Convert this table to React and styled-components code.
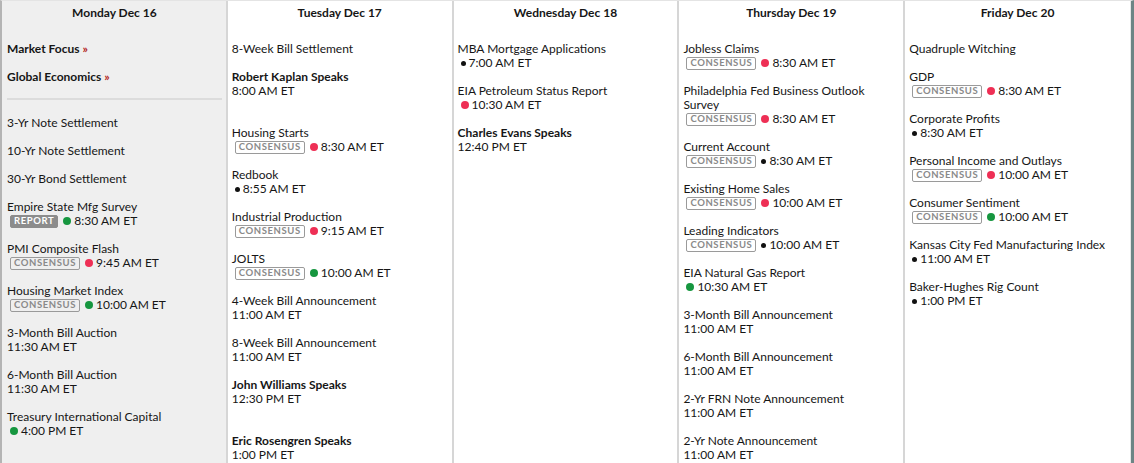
import styled, { createGlobalStyle } from 'styled-components'

const GlobalStyle = createGlobalStyle`
  html, body {
    margin: 0;
    padding: 0;
    background: #fff;
    overflow: hidden;
  }
  body {
    font-family: Lato, "Open Sans", sans-serif;
    color: #161616;
  }
`

const Calendar = styled.div`
  display: grid;
  grid-template-columns: repeat(5, 1fr);
  width: 1134px;
  height: 463px;
  box-sizing: border-box;
  border-left: 2px solid #b4b4b4;
  border-right: 3px solid #6d8585;
  border-top: 1px solid #e4e4e4;
  overflow: hidden;
`

const Day = styled.div`
  background: ${p => (p.$today ? '#efefef' : '#fff')};
  border-right: 2px solid #d6d6d6;
  padding: 0 4px 0 ${p => (p.$today ? '5px' : '4px')};
  font-size: 12px;
  line-height: 14px;

  &:last-child {
    border-right: 1px solid #e6e6e6;
  }
`

const DayHeader = styled.div`
  text-align: center;
  font-weight: 700;
  padding-top: 5px;
  margin-bottom: 22px;
`

const Event = styled.div`
  margin-bottom: ${p => (p.$speaker ? '28px' : '14px')};
`

const Name = styled.div`
  font-weight: ${p => (p.$bold ? 700 : 400)};
`

const FocusLink = styled.div`
  font-weight: 700;
  margin-bottom: 14px;

  span {
    color: #b3261e;
    font-weight: 700;
  }
`

const Divider = styled.div`
  border-top: 2px solid #dcdcdc;
  margin: 0 0 16px;
`

const Meta = styled.div`
  display: flex;
  align-items: center;
  padding-left: ${p => (p.$marked ? '3px' : '0')};
  white-space: nowrap;
`

const Badge = styled.span`
  display: inline-flex;
  align-items: center;
  height: 11px;
  padding: 0 3px;
  margin-right: 5px;
  font-size: 9.5px;
  font-weight: 700;
  letter-spacing: 0.6px;
  border-radius: 2px;
  border: 1px solid ${p => (p.$report ? '#8c8c8c' : '#9a9a9a')};
  background: ${p => (p.$report ? '#8c8c8c' : 'transparent')};
  color: ${p => (p.$report ? '#fff' : '#8a8a8a')};
`

const Dot = styled.span`
  display: inline-block;
  flex: none;
  width: ${p => (p.$color === 'black' ? '5px' : '8px')};
  height: ${p => (p.$color === 'black' ? '5px' : '8px')};
  border-radius: 50%;
  margin-right: 3px;
  background: ${p =>
    p.$color === 'red' ? '#ee2f55' : p.$color === 'green' ? '#16963f' : '#111'};
`

const days = [
  {
    title: 'Monday Dec 16',
    today: true,
    events: [
      { name: '3-Yr Note Settlement' },
      { name: '10-Yr Note Settlement' },
      { name: '30-Yr Bond Settlement' },
      { name: 'Empire State Mfg Survey', badge: 'REPORT', dot: 'green', time: '8:30 AM ET' },
      { name: 'PMI Composite Flash', badge: 'CONSENSUS', dot: 'red', time: '9:45 AM ET' },
      { name: 'Housing Market Index', badge: 'CONSENSUS', dot: 'green', time: '10:00 AM ET' },
      { name: '3-Month Bill Auction', time: '11:30 AM ET' },
      { name: '6-Month Bill Auction', time: '11:30 AM ET' },
      { name: 'Treasury International Capital', dot: 'green', time: '4:00 PM ET' },
    ],
  },
  {
    title: 'Tuesday Dec 17',
    events: [
      { name: '8-Week Bill Settlement' },
      { name: 'Robert Kaplan Speaks', speaker: true, time: '8:00 AM ET' },
      { name: 'Housing Starts', badge: 'CONSENSUS', dot: 'red', time: '8:30 AM ET' },
      { name: 'Redbook', dot: 'black', time: '8:55 AM ET' },
      { name: 'Industrial Production', badge: 'CONSENSUS', dot: 'red', time: '9:15 AM ET' },
      { name: 'JOLTS', badge: 'CONSENSUS', dot: 'green', time: '10:00 AM ET' },
      { name: '4-Week Bill Announcement', time: '11:00 AM ET' },
      { name: '8-Week Bill Announcement', time: '11:00 AM ET' },
      { name: 'John Williams Speaks', speaker: true, time: '12:30 PM ET' },
      { name: 'Eric Rosengren Speaks', speaker: true, time: '1:00 PM ET' },
    ],
  },
  {
    title: 'Wednesday Dec 18',
    events: [
      { name: 'MBA Mortgage Applications', dot: 'black', time: '7:00 AM ET' },
      { name: 'EIA Petroleum Status Report', dot: 'red', time: '10:30 AM ET' },
      { name: 'Charles Evans Speaks', speaker: true, time: '12:40 PM ET' },
    ],
  },
  {
    title: 'Thursday Dec 19',
    events: [
      { name: 'Jobless Claims', badge: 'CONSENSUS', dot: 'red', time: '8:30 AM ET' },
      { name: 'Philadelphia Fed Business Outlook Survey', badge: 'CONSENSUS', dot: 'red', time: '8:30 AM ET' },
      { name: 'Current Account', badge: 'CONSENSUS', dot: 'black', time: '8:30 AM ET' },
      { name: 'Existing Home Sales', badge: 'CONSENSUS', dot: 'red', time: '10:00 AM ET' },
      { name: 'Leading Indicators', badge: 'CONSENSUS', dot: 'black', time: '10:00 AM ET' },
      { name: 'EIA Natural Gas Report', dot: 'green', time: '10:30 AM ET' },
      { name: '3-Month Bill Announcement', time: '11:00 AM ET' },
      { name: '6-Month Bill Announcement', time: '11:00 AM ET' },
      { name: '2-Yr FRN Note Announcement', time: '11:00 AM ET' },
      { name: '2-Yr Note Announcement', time: '11:00 AM ET' },
    ],
  },
  {
    title: 'Friday Dec 20',
    events: [
      { name: 'Quadruple Witching' },
      { name: 'GDP', badge: 'CONSENSUS', dot: 'red', time: '8:30 AM ET' },
      { name: 'Corporate Profits', dot: 'black', time: '8:30 AM ET' },
      { name: 'Personal Income and Outlays', badge: 'CONSENSUS', dot: 'red', time: '10:00 AM ET' },
      { name: 'Consumer Sentiment', badge: 'CONSENSUS', dot: 'green', time: '10:00 AM ET' },
      { name: 'Kansas City Fed Manufacturing Index', dot: 'black', time: '11:00 AM ET' },
      { name: 'Baker-Hughes Rig Count', dot: 'black', time: '1:00 PM ET' },
    ],
  },
]

const EventItem = ({ ev }) => (
  <Event $speaker={ev.speaker}>
    <Name $bold={ev.speaker}>{ev.name}</Name>
    {ev.time && (
      <Meta $marked={ev.badge || ev.dot}>
        {ev.badge && <Badge $report={ev.badge === 'REPORT'}>{ev.badge}</Badge>}
        {ev.dot && <Dot $color={ev.dot} />}
        {ev.time}
      </Meta>
    )}
  </Event>
)

const App = () => {
  return (
    <>
      <GlobalStyle />
      <Calendar>
        {days.map(d => (
          <Day key={d.title} $today={d.today}>
            <DayHeader>{d.title}</DayHeader>
            {d.today && (
              <>
                <FocusLink>Market Focus <span>»</span></FocusLink>
                <FocusLink>Global Economics <span>»</span></FocusLink>
                <Divider />
              </>
            )}
            {d.events.map(ev => (
              <EventItem key={ev.name} ev={ev} />
            ))}
          </Day>
        ))}
      </Calendar>
    </>
  )
}

export default App
